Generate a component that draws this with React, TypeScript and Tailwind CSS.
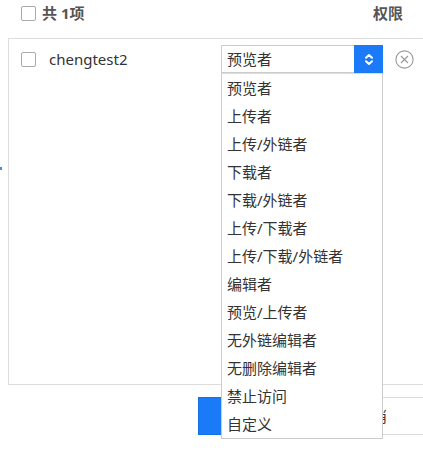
const roles = [
  "预览者",
  "上传者",
  "上传/外链者",
  "下载者",
  "下载/外链者",
  "上传/下载者",
  "上传/下载/外链者",
  "编辑者",
  "预览/上传者",
  "无外链编辑者",
  "无删除编辑者",
  "禁止访问",
  "自定义",
];

const Checkbox = () => (
  <span className="block w-[15px] h-[15px] border border-[#aaa] rounded-[2px] bg-white shrink-0" />
);

const App = () => {
  return (
    <div
      className="relative w-[423px] h-[455px] overflow-hidden bg-white text-[15px] text-[#333]"
      style={{ fontFamily: '"Noto Sans", "Noto Sans CJK SC", sans-serif' }}
    >
      {/* header */}
      <div className="flex items-center h-[26px] pl-[21px] pr-[20px]">
        <Checkbox />
        <span className="ml-[6px] font-bold text-[#555] leading-none">共 1项</span>
        <span className="ml-auto font-bold text-[#555] leading-none">权限</span>
      </div>

      {/* member panel */}
      <div className="mt-[12px] ml-[8px] mr-[-20px] h-[347px] border border-[#ddd]">
        <div className="flex items-center mt-[6px] h-[28px]">
          <div className="flex items-center w-[212px] pl-[12px]">
            <Checkbox />
            <span className="ml-[13px] leading-none">chengtest2</span>
          </div>
          <div className="flex w-[162px] h-[28px] border border-[#ccc] border-r-0">
            <span className="flex-1 flex items-center pl-[5px] leading-none">预览者</span>
            <span className="w-[29px] h-[28px] -mt-px bg-[#1a7af8] flex items-center justify-center">
              <svg width="10" height="13" viewBox="0 0 10 13" fill="none" stroke="white" strokeWidth="2" strokeLinecap="round" strokeLinejoin="round">
                <path d="M2 4.8 L5 2 L8 4.8" />
                <path d="M2 8.2 L5 11 L8 8.2" />
              </svg>
            </span>
          </div>
          <svg className="ml-[12px]" width="19" height="19" viewBox="0 0 19 19" fill="none" stroke="#999" strokeWidth="1.1">
            <circle cx="9.5" cy="9.5" r="8.6" />
            <path d="M6 6 L13 13 M13 6 L6 13" />
          </svg>
        </div>
      </div>

      {/* footer buttons (mostly covered by the open dropdown) */}
      <div className="flex mt-[12px]">
        <button aria-label="确定" className="shrink-0 ml-[198px] w-[80px] h-[38px] bg-[#1a7af8] border border-[#1570e6]" />
        <button className="shrink-0 ml-[12px] w-[180px] h-[38px] border border-[#ddd] bg-white text-[#333] text-left pl-[66px] leading-none">取消</button>
      </div>

      {/* stray marker at left edge */}
      <div className="absolute left-0 top-[167px] w-[2px] h-[3px] bg-[#3a8ef8]" />

      {/* dropdown list */}
      <ul className="absolute left-[221px] top-[73px] w-[162px] bg-white border border-[#ccc] border-t-[#ddd]">
        {roles.map((r) => (
          <li key={r} className="h-[28px] flex items-center pl-[5px] leading-none">
            {r}
          </li>
        ))}
      </ul>
    </div>
  );
};

export default App;
